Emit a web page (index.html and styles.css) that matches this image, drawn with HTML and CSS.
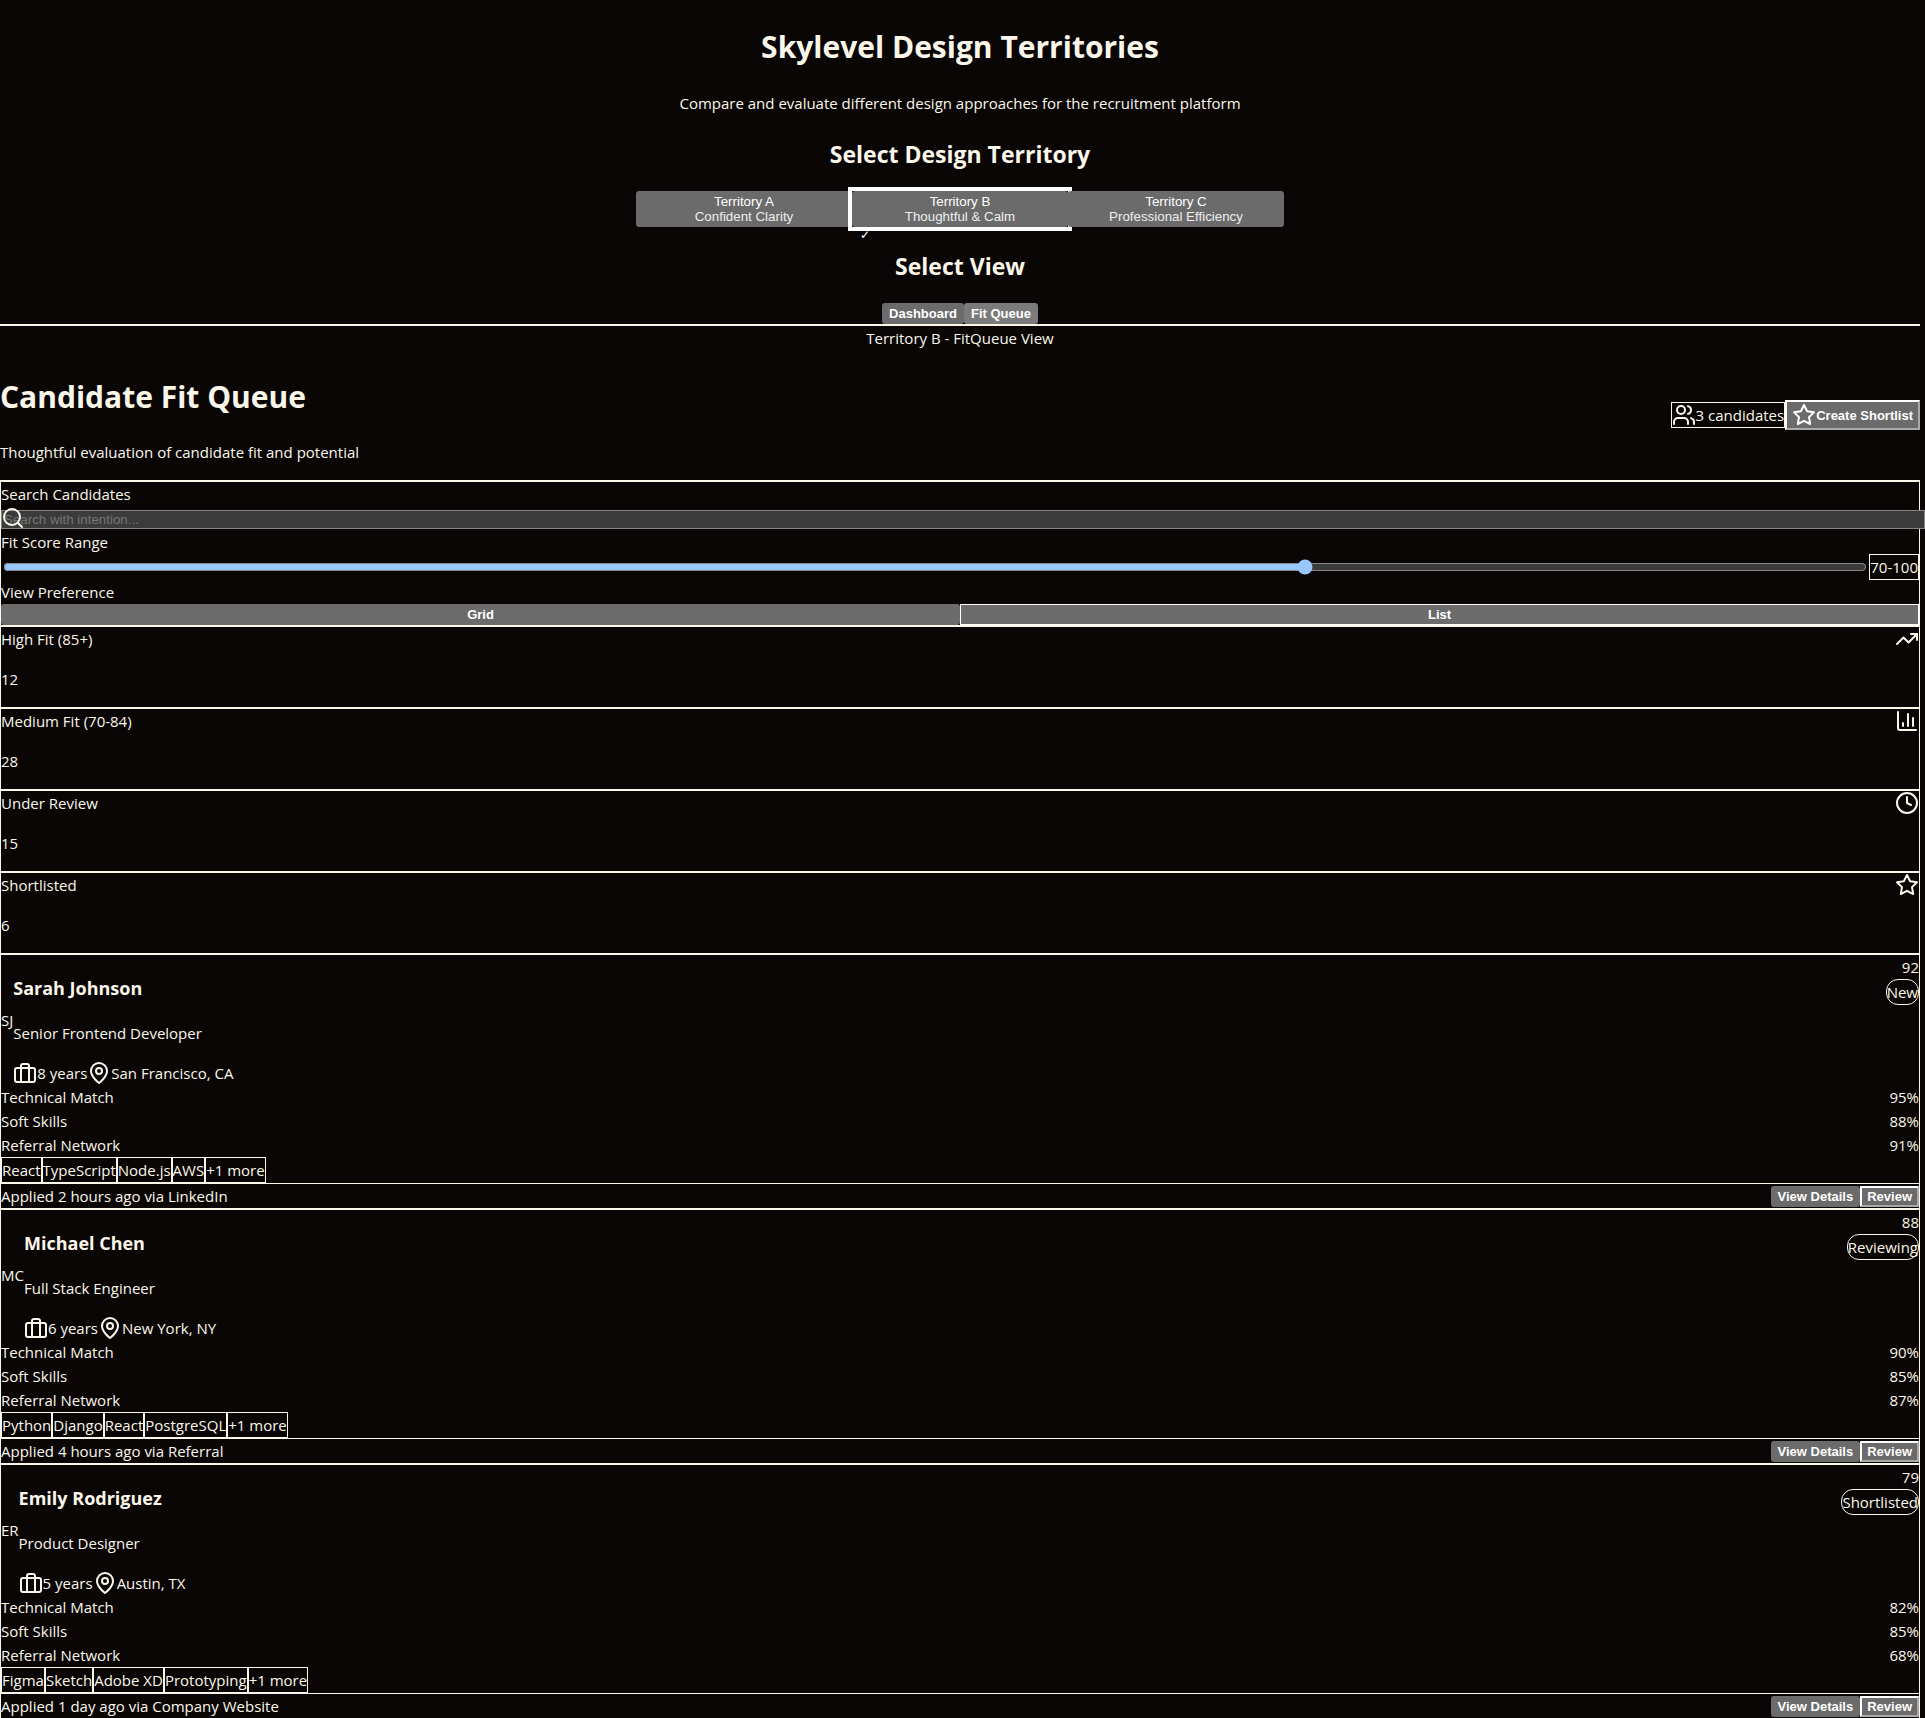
FILE: index.html
```html
<!DOCTYPE html>
<html lang="en">
<head>
<meta charset="utf-8">
<title>Skylevel Design Territories</title>
<link rel="stylesheet" href="styles.css">
</head>
<body>
<svg class="sprite" aria-hidden="true">
  <symbol id="i-users" viewBox="0 0 24 24"><path d="M16 21v-2a4 4 0 0 0-4-4H6a4 4 0 0 0-4 4v2"/><circle cx="9" cy="7" r="4"/><path d="M22 21v-2a4 4 0 0 0-3-3.87M16 3.13a4 4 0 0 1 0 7.75"/></symbol>
  <symbol id="i-star" viewBox="0 0 24 24"><path d="M12 2l3.09 6.26L22 9.27l-5 4.87 1.18 6.88L12 17.77l-6.18 3.25L7 14.14 2 9.27l6.91-1.01z"/></symbol>
  <symbol id="i-search" viewBox="0 0 24 24"><circle cx="11" cy="11" r="8"/><path d="M21 21l-4.3-4.3"/></symbol>
  <symbol id="i-trend" viewBox="0 0 24 24"><path d="M22 7l-8.500 8.500-5-5L2 17"/><path d="M16 7h6v6"/></symbol>
  <symbol id="i-chart" viewBox="0 0 24 24"><path d="M3 3v16a2 2 0 0 0 2 2h16M18 17V9M13 17V5M8 17v-3"/></symbol>
  <symbol id="i-clock" viewBox="0 0 24 24"><circle cx="12" cy="12" r="10"/><path d="M12 6v6l4 2"/></symbol>
  <symbol id="i-case" viewBox="0 0 24 24"><rect x="2" y="7" width="20" height="14" rx="2"/><path d="M16 21V5a2 2 0 0 0-2-2h-4a2 2 0 0 0-2 2v16"/></symbol>
  <symbol id="i-pin" viewBox="0 0 24 24"><path d="M20 10c0 6-8 12-8 12s-8-6-8-12a8 8 0 0 1 16 0z"/><circle cx="12" cy="10" r="3"/></symbol>
</svg>

<header class="hero">
  <h1 class="hero-title">Skylevel Design Territories</h1>
  <p class="hero-text">Compare and evaluate different design approaches for the recruitment platform</p>
  <h2>Select Design Territory</h2>
  <div class="territories">
    <button class="territory" type="button"><span>Territory A</span><span class="desc">Confident Clarity</span></button>
    <button class="territory selected" type="button"><span>Territory B</span><span class="desc">Thoughtful &amp; Calm</span></button>
    <button class="territory" type="button"><span>Territory C</span><span class="desc">Professional Efficiency</span></button>
  </div>
  <h2>Select View</h2>
  <div class="views">
    <button class="btn" type="button">Dashboard</button>
    <button class="btn current" type="button">Fit Queue</button>
  </div>
</header>
<div class="indicator">Territory B - FitQueue View</div>

<main>
  <header class="page-head">
    <div>
      <h1>Candidate Fit Queue</h1>
      <p>Thoughtful evaluation of candidate fit and potential</p>
    </div>
    <div class="head-actions">
      <span class="chip"><svg class="icon"><use href="#i-users"/></svg>3 candidates</span>
      <button class="btn primary" type="button"><svg class="icon"><use href="#i-star"/></svg>Create Shortlist</button>
    </div>
  </header>

  <section class="filters">
    <label for="search">Search Candidates</label>
    <div class="search">
      <input id="search" class="search-input" type="text" placeholder="Search with intention...">
      <svg class="icon search-icon"><use href="#i-search"/></svg>
    </div>
    <label for="score">Fit Score Range</label>
    <div class="range">
      <input id="score" class="slider" type="range" min="0" max="100" value="70">
      <span class="chip">70-100</span>
    </div>
    <span>View Preference</span>
    <div class="toggle">
      <button class="btn" type="button">Grid</button>
      <button class="btn outlined" type="button">List</button>
    </div>
  </section>

  <section>
    <div class="stat"><div class="row"><span>High Fit (85+)</span><svg class="icon"><use href="#i-trend"/></svg></div><p>12</p></div>
    <div class="stat"><div class="row"><span>Medium Fit (70-84)</span><svg class="icon"><use href="#i-chart"/></svg></div><p>28</p></div>
    <div class="stat"><div class="row"><span>Under Review</span><svg class="icon"><use href="#i-clock"/></svg></div><p>15</p></div>
    <div class="stat"><div class="row"><span>Shortlisted</span><svg class="icon"><use href="#i-star"/></svg></div><p>6</p></div>
  </section>

  <section>
    <article class="card">
      <div class="row top">
        <div class="person">
          <span>SJ</span>
          <div>
            <h3>Sarah Johnson</h3>
            <p>Senior Frontend Developer</p>
            <div class="meta"><svg class="icon"><use href="#i-case"/></svg><span>8 years</span><svg class="icon"><use href="#i-pin"/></svg><span>San Francisco, CA</span></div>
          </div>
        </div>
        <div class="score"><span>92</span><span class="chip pill">New</span></div>
      </div>
      <div class="row"><span>Technical Match</span><span>95%</span></div>
      <div class="row"><span>Soft Skills</span><span>88%</span></div>
      <div class="row"><span>Referral Network</span><span>91%</span></div>
      <div class="tags"><span class="chip">React</span><span class="chip">TypeScript</span><span class="chip">Node.js</span><span class="chip">AWS</span><span class="chip">+1 more</span></div>
      <footer class="row foot"><span>Applied 2 hours ago via LinkedIn</span><span class="actions"><button class="btn" type="button">View Details</button><button class="btn primary" type="button">Review</button></span></footer>
    </article>

    <article class="card">
      <div class="row top">
        <div class="person">
          <span>MC</span>
          <div>
            <h3>Michael Chen</h3>
            <p>Full Stack Engineer</p>
            <div class="meta"><svg class="icon"><use href="#i-case"/></svg><span>6 years</span><svg class="icon"><use href="#i-pin"/></svg><span>New York, NY</span></div>
          </div>
        </div>
        <div class="score"><span>88</span><span class="chip pill">Reviewing</span></div>
      </div>
      <div class="row"><span>Technical Match</span><span>90%</span></div>
      <div class="row"><span>Soft Skills</span><span>85%</span></div>
      <div class="row"><span>Referral Network</span><span>87%</span></div>
      <div class="tags"><span class="chip">Python</span><span class="chip">Django</span><span class="chip">React</span><span class="chip">PostgreSQL</span><span class="chip">+1 more</span></div>
      <footer class="row foot"><span>Applied 4 hours ago via Referral</span><span class="actions"><button class="btn" type="button">View Details</button><button class="btn primary" type="button">Review</button></span></footer>
    </article>

    <article class="card">
      <div class="row top">
        <div class="person">
          <span>ER</span>
          <div>
            <h3>Emily Rodriguez</h3>
            <p>Product Designer</p>
            <div class="meta"><svg class="icon"><use href="#i-case"/></svg><span>5 years</span><svg class="icon"><use href="#i-pin"/></svg><span>Austin, TX</span></div>
          </div>
        </div>
        <div class="score"><span>79</span><span class="chip pill">Shortlisted</span></div>
      </div>
      <div class="row"><span>Technical Match</span><span>82%</span></div>
      <div class="row"><span>Soft Skills</span><span>85%</span></div>
      <div class="row"><span>Referral Network</span><span>68%</span></div>
      <div class="tags"><span class="chip">Figma</span><span class="chip">Sketch</span><span class="chip">Adobe XD</span><span class="chip">Prototyping</span><span class="chip">+1 more</span></div>
      <footer class="row foot"><span>Applied 1 day ago via Company Website</span><span class="actions"><button class="btn" type="button">View Details</button><button class="btn primary" type="button">Review</button></span></footer>
    </article>
  </section>
</main>
</body>
</html>
```
FILE: styles.css
```css
:root {
  color-scheme: dark;
  --bg: #0a0605;
  --ink: #faf6ea;
  --button: #6b6b6b;
}

body {
  margin: 0;
  padding-right: 5px;
  background: var(--bg);
  color: var(--ink);
  font-family: "Segoe UI", "Open Sans", "Noto Sans", sans-serif;
  font-size: 15px;
  line-height: 24px;
}

h1 { margin: 23px 0 19px; font-size: 30px; line-height: 48px; }
h2 { margin: 21px 0 19px; font-size: 23px; line-height: 36px; }
h3 { margin: 19px 0; font-size: 18px; line-height: 28px; }
p { margin: 0 0 16px; }

.sprite { position: absolute; width: 0; height: 0; }

.icon {
  flex: none;
  width: 24px;
  height: 24px;
  fill: none;
  stroke: currentColor;
  stroke-width: 2;
  stroke-linecap: round;
  stroke-linejoin: round;
}

.btn, .territory {
  display: inline-flex;
  align-items: center;
  justify-content: center;
  padding: 3px 7px;
  border: 0;
  border-radius: 3px;
  background: var(--button);
  color: #fff;
  font-family: "Liberation Sans", Arial, sans-serif;
  line-height: 15px;
}
.btn { font-size: 13px; font-weight: bold; }

.btn.current { background: #7b7b7b; }
.btn.primary {
  padding: 1px 5px;
  border: 2px solid;
  border-color: #fff #aaa #aaa #fff;
  border-radius: 0;
}
.btn.outlined { padding: 2px 6px; border: 1px solid #fff; border-radius: 0; }

.hero {
  display: flow-root;
  border-bottom: 2px solid var(--ink);
  text-align: center;
}
.hero-title { margin-bottom: 20px; }

.territories {
  display: grid;
  grid-template-columns: repeat(3, 216px);
  justify-content: center;
}
.territory { position: relative; flex-direction: column; }
.territory.selected::before {
  content: "";
  position: absolute;
  inset: -4px;
  border: 4px solid #fff;
}
.territory.selected::after {
  content: "✓";
  position: absolute;
  left: 8px;
  top: 38px;
  font-size: 12px;
  line-height: 12px;
}
.territory:last-child { z-index: 1; }
.desc { color: #eee; }

.views { display: flex; justify-content: center; }
.indicator { text-align: center; }

.page-head {
  display: flex;
  align-items: center;
  justify-content: space-between;
  border-bottom: 1px solid var(--ink);
}
.head-actions { display: flex; align-items: center; }

.chip {
  display: inline-flex;
  align-items: center;
  border: 1px solid var(--ink);
}
.pill { border-radius: 12px; }

.filters {
  display: flex;
  flex-direction: column;
  border: 1px solid var(--ink);
}
.search { position: relative; padding: 4px 0 1px; height: 19px; }
.search-icon { position: absolute; left: 0; top: 0; }
.search-input {
  display: block;
  box-sizing: content-box;
  width: 100%;
  height: 15px;
  padding: 1px 2px;
  border: 1px solid #858585;
  background: #3b3b3b;
  font-family: "Liberation Sans", Arial, sans-serif;
}
.search-input::placeholder { color: #757575; }
.range { display: flex; align-items: center; }
.slider { flex: 1; margin: 2px; }
.toggle { display: grid; grid-template-columns: 1fr 1fr; }

.stat, .card { border: 1px solid var(--ink); }
.stat p { margin: 16px 0; }
.row { display: flex; align-items: center; justify-content: space-between; }
.top { align-items: flex-start; }
.person, .meta, .tags, .actions { display: flex; align-items: center; }
.score { display: flex; flex-direction: column; align-items: flex-end; }
.foot { border-top: 1px solid var(--ink); }
```
